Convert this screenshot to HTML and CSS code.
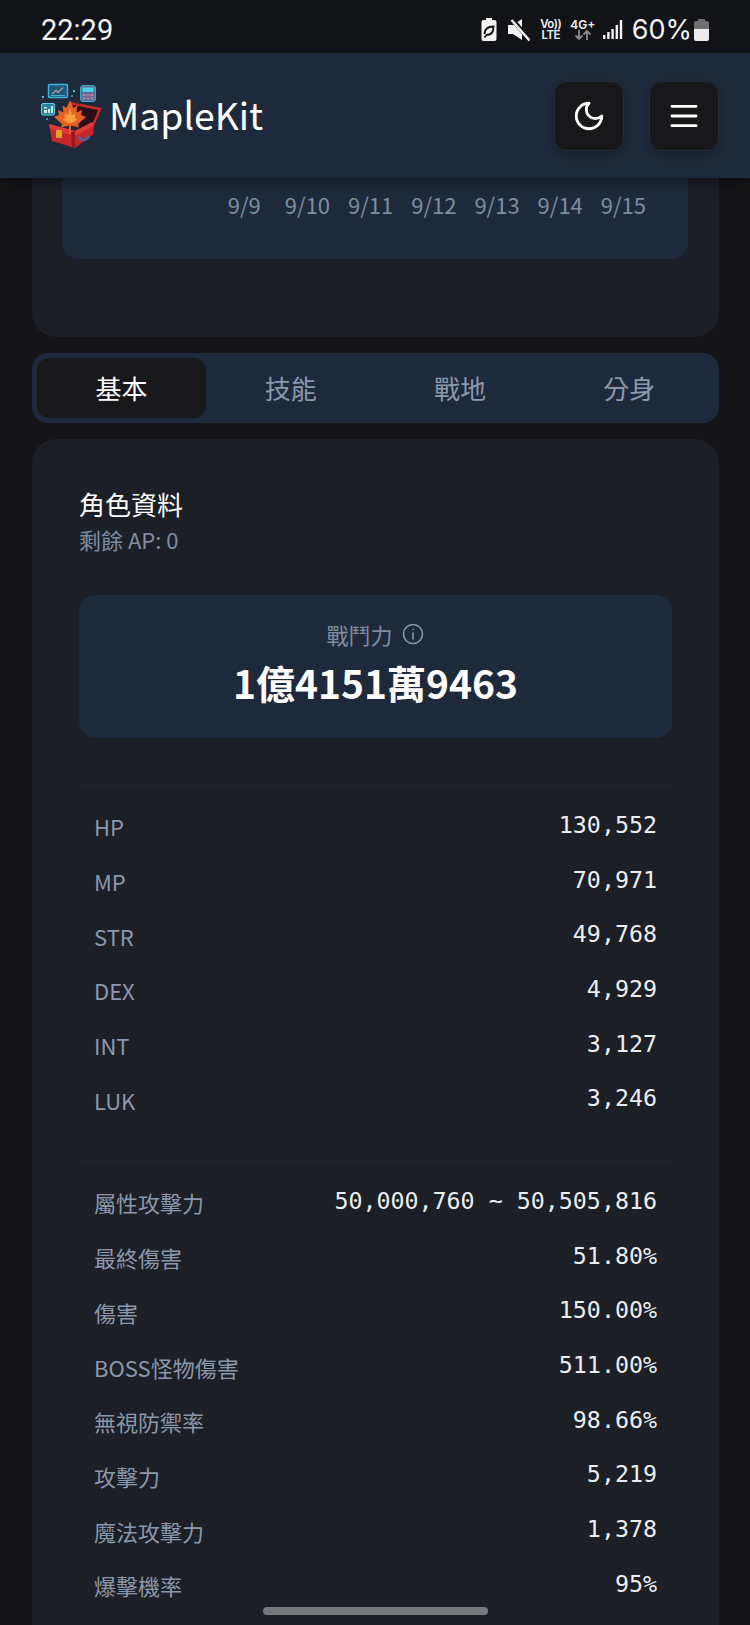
FILE: index.html
```html
<!DOCTYPE html>
<html lang="zh-Hant">
<head>
	<meta charset="utf-8">
	<title>MapleKit</title>
	<link rel="stylesheet" href="styles.css">
</head>
<body>
	<div class="status-bar">
		<span class="clock">22:29</span>
		<div class="status-icons">
			<svg class="ic-saver" width="16" height="23" viewBox="0 0 16 23"><path d="M5 0h6v2h2.500a2 2 0 0 1 2 2v17a2 2 0 0 1-2 2h-11a2 2 0 0 1-2-2V4a2 2 0 0 1 2-2H5z" fill="#f2f2f2"/><path d="M3.500 16c0-5 3-7.500 9-7.500 0 5.500-2.500 8.500-7 8.500l-2 2.500" fill="none" stroke="#15161a" stroke-width="2"/></svg>
			<svg class="ic-mute" width="22" height="22" viewBox="0 0 22 22"><path d="M0 6h5l9-6v21l-9-6H0z" fill="#f2f2f2"/><path d="M3 -1l20 23" stroke="#15161a" stroke-width="4.500"/><path d="M3.500 1l18 20.500" stroke="#f2f2f2" stroke-width="2.400"/></svg>
			<span class="volte">Vo))<br>LTE</span>
			<span class="net">4G+<svg width="18" height="10" viewBox="0 0 18 10"><path d="M5 0v9M1.500 5.500 5 9l3.500-3.500" fill="none" stroke="#8a8a8a" stroke-width="1.800"/><path d="M13 10V1M9.500 4.500 13 1l3.500 3.500" fill="none" stroke="#8a8a8a" stroke-width="1.800"/></svg></span>
			<svg class="ic-signal" width="20" height="21" viewBox="0 0 20 21"><path d="M0 16h2.400v4H0zM4.200 13h2.400v7H4.200zM8.400 10h2.400v10H8.400zM12.600 6H15v14h-2.400zM16.800 1h2.400v19h-2.400z" fill="#f2f2f2"/></svg>
			<span class="pct">60%</span>
			<svg class="ic-batt" width="15" height="22" viewBox="0 0 15 22"><path d="M4 0h7v2h2a2 2 0 0 1 2 2v6H0V4a2 2 0 0 1 2-2h2z" fill="#6f6f72"/><path d="M0 10h15v10a2 2 0 0 1-2 2H2a2 2 0 0 1-2-2z" fill="#ececec"/></svg>
		</div>
	</div>

	<header class="top-nav">
		<div class="brand">
			<svg class="logo" width="62" height="68" viewBox="0 0 62 68">
				<circle cx="2" cy="15" r="1.200" fill="#4fb6c9"/>
				<circle cx="33" cy="9" r="1.200" fill="#4fb6c9"/>
				<circle cx="31" cy="14" r="1" fill="#4fb6c9"/>
				<circle cx="6" cy="37" r="1" fill="#4fb6c9"/>
				<rect x="7.500" y="2.500" width="19" height="13" rx="1" fill="#24567a" stroke="#38b6d8" stroke-width="1.400"/>
				<path d="M11 12l4-3.500 2 2 5-5" fill="none" stroke="#9aa0a8" stroke-width="1.300"/>
				<path d="M10 13.500h14" stroke="#4fa6c8"/>
				<rect x="39.500" y="3.500" width="15" height="16" rx="2.500" fill="#5a6f96" stroke="#3aa6c8"/>
				<rect x="41.500" y="5.500" width="11" height="4.500" fill="#4fd0e6"/>
				<path d="M41.500 12h3v2h-3zM45.500 12h3v2h-3zM49.500 12h3v2h-3zM41.500 15.500h3v2h-3zM45.500 15.500h3v2h-3zM49.500 15.500h3v2h-3z" fill="#b87898"/>
				<rect x="0.500" y="21.500" width="13" height="11.500" rx="1.500" fill="#2a7f9c" stroke="#5fd0e6"/>
				<path d="M3 25h3v1.500H3zM3 28h3v3H3zM7 27h2v4H7zM10 24h2v7h-2z" fill="#c8f0d8"/>
				<path d="M28 21l31 6-9 21-30-6z" fill="#2a0f1a"/>
				<path d="M28 21l31 6-9 21" fill="none" stroke="#c62a2a" stroke-width="2.500"/>
				<path d="M8 42l26 7 18-9 .5 12L34 66 11 59z" fill="#c4262a"/>
				<path d="M8 42l26 7 17-9 1.500 4L34 54 9 47z" fill="#e0383a"/>
				<path d="M34 49v17l-3-1-1-15z" fill="#98181f"/>
				<rect x="15" y="48" width="6" height="8" rx="1" fill="#e0a028"/>
				<path d="M38 55c2 4 7 4 10-1" fill="none" stroke="#5a5f90" stroke-width="3"/>
				<path d="M29 18l3.500 8 4-2.500-1 7 5.500-2.500-1 5 5 2-8 7 1 3.500-8-2v8h-2v-8l-8 2 1-3.500-8-7 5-2-1-5 5.500 2.500-1-7 4 2.500z" fill="#e8601f"/>
				<path d="M29 26l2 7 3.500-1.500-1 5 3 1-5.500 3.500h-4l-5.500-3.500 3-1-1-5 3.500 1.500z" fill="#f8a040"/>
			</svg>
			<span class="brand-name">MapleKit</span>
		</div>
		<div class="nav-btns">
			<button class="nav-btn"><svg width="34" height="34" viewBox="0 0 24 24" fill="none" stroke="#fff" stroke-width="2" stroke-linecap="round" stroke-linejoin="round"><path d="M12 3a6 6 0 0 0 9 9 9 9 0 1 1-9-9z"/></svg></button>
			<button class="nav-btn"><svg width="34" height="34" viewBox="0 0 24 24" fill="none" stroke="#fff" stroke-width="2" stroke-linecap="round"><path d="M3.500 5.200h17M3.500 12h17M3.500 18.800h17"/></svg></button>
		</div>
	</header>

	<main class="content">
		<section class="card chart-card">
			<div class="chart-box">
				<div class="chart-axis">
					<span>9/9</span><span>9/10</span><span>9/11</span><span>9/12</span><span>9/13</span><span>9/14</span><span>9/15</span>
				</div>
			</div>
		</section>

		<nav class="tabs">
			<span class="tab active">基本</span>
			<span class="tab">技能</span>
			<span class="tab">戰地</span>
			<span class="tab">分身</span>
		</nav>

		<section class="card stats-card">
			<h2 class="card-title">角色資料</h2>
			<p class="card-sub">剩餘 AP: 0</p>

			<div class="power-box">
				<div class="power-label">戰鬥力
					<svg width="24" height="24" viewBox="0 0 24 24" fill="none" stroke="#8b98ab" stroke-width="1.600" stroke-linecap="round"><circle cx="12" cy="12" r="9.500"/><path d="M12 11v6M12 7.300v.2"/></svg>
				</div>
				<div class="power-value">1億4151萬9463</div>
			</div>

			<div class="stat-group">
				<div class="stat-row"><span>HP</span><b>130,552</b></div>
				<div class="stat-row"><span>MP</span><b>70,971</b></div>
				<div class="stat-row"><span>STR</span><b>49,768</b></div>
				<div class="stat-row"><span>DEX</span><b>4,929</b></div>
				<div class="stat-row"><span>INT</span><b>3,127</b></div>
				<div class="stat-row"><span>LUK</span><b>3,246</b></div>
			</div>

			<div class="stat-group">
				<div class="stat-row"><span>屬性攻擊力</span><b>50,000,760 ~ 50,505,816</b></div>
				<div class="stat-row"><span>最終傷害</span><b>51.80%</b></div>
				<div class="stat-row"><span>傷害</span><b>150.00%</b></div>
				<div class="stat-row"><span>BOSS怪物傷害</span><b>511.00%</b></div>
				<div class="stat-row"><span>無視防禦率</span><b>98.66%</b></div>
				<div class="stat-row"><span>攻擊力</span><b>5,219</b></div>
				<div class="stat-row"><span>魔法攻擊力</span><b>1,378</b></div>
				<div class="stat-row"><span>爆擊機率</span><b>95%</b></div>
			</div>
		</section>
	</main>

	<div class="home-bar"></div>
</body>
</html>
```

FILE: styles.css
```css
*{
	margin: 0;
	padding: 0;
	box-sizing: border-box;
}
html,body{
	height: 1625px;
	overflow: hidden;
}
body{
	background-color: #141416;
	font-family: "Noto Sans CJK TC", "Noto Sans", sans-serif;
	position: relative;
	color: #fff;
}

/* status bar */
.status-bar{
	height: 53px;
	background-color: #121317;
	display: flex;
	align-items: center;
	justify-content: space-between;
	padding: 6px 41px 0 41px;
}
.clock{
	font-family: Roboto, sans-serif;
	font-size: 29px;
	color: #f4f4f4;
}
.status-icons{
	display: flex;
	align-items: center;
	color: #f2f2f2;
	font-family: Inter, Roboto, sans-serif;
}
.ic-saver{
	margin-right: 11px;
}
.ic-mute{
	margin-right: 10px;
}
.volte{
	width: 22px;
	font-size: 11.500px;
	font-weight: 600;
	letter-spacing: -.5px;
	line-height: 11px;
	text-align: center;
	margin-right: 9px;
	white-space: nowrap;
}
.net{
	width: 24px;
	font-size: 12px;
	font-weight: 600;
	line-height: 11px;
	display: flex;
	flex-direction: column;
	align-items: center;
	margin-right: 8px;
	white-space: nowrap;
}
.ic-signal{
	margin-right: 9px;
}
.pct{
	font-size: 27px;
	margin-right: 2px;
}

/* header */
.top-nav{
	height: 125px;
	background-color: #1e293b;
	display: flex;
	align-items: center;
	justify-content: space-between;
	padding: 0 31px 0 41px;
	position: relative;
	z-index: 2;
	box-shadow: 0 4px 10px rgba(0,0,0,.4);
}
.brand{
	display: flex;
	align-items: center;
	gap: 6px;
}
.brand-name{
	font-size: 37.300px;
	line-height: 1;
	margin-bottom: 2px;
}
.nav-btns{
	display: flex;
	gap: 25px;
}
.nav-btn{
	width: 70px;
	height: 70px;
	border: 1px solid #272c36;
	border-radius: 12px;
	background-color: #18181b;
	display: flex;
	align-items: center;
	justify-content: center;
	box-shadow: 0 4px 12px rgba(0,0,0,.25);
}

/* page */
.content{
	padding: 0 31px 0 32px;
}
.card{
	background-color: #1c1f26;
	border-radius: 24px;
}
.chart-card{
	height: 159px;
	padding: 0 31px 0 30px;
	border-radius: 0 0 24px 24px;
}
.chart-box{
	height: 81px;
	background-color: #1e293b;
	border-radius: 0 0 16px 16px;
	padding: 10px 33px 0 0;
}
.chart-axis{
	display: flex;
	justify-content: flex-end;
	font-size: 22px;
	line-height: 32px;
	color: #7f8c9f;
}
.chart-axis span{
	width: 63.200px;
	text-align: center;
	white-space: nowrap;
}

.tabs{
	height: 70px;
	margin-top: 16px;
	background-color: #1e293b;
	border-radius: 16px;
	padding: 5px;
	display: flex;
}
.tab{
	flex: 1;
	border-radius: 12px;
	font-size: 26px;
	color: #8b98ab;
	display: flex;
	align-items: center;
	justify-content: center;
	padding-bottom: 2px;
}
.tab.active{
	background-color: #18181b;
	color: #fff;
}

.stats-card{
	margin-top: 16px;
	padding: 48px 47px 0;
	height: 1186px;
	border-radius: 24px 24px 0 0;
}
.card-title{
	font-size: 26px;
	font-weight: 400;
	line-height: 34px;
}
.card-sub{
	font-size: 22px;
	line-height: 34px;
	margin-top: 1px;
	color: #7f8c9f;
}
.power-box{
	margin-top: 39px;
	height: 143px;
	background-color: #1e293b;
	border-radius: 16px;
	display: flex;
	flex-direction: column;
	align-items: center;
	padding-top: 24px;
}
.power-label{
	font-size: 22px;
	line-height: 30px;
	color: #7f8c9f;
	display: flex;
	align-items: center;
	gap: 8px;
}
.power-value{
	font-size: 39px;
	font-weight: 700;
	line-height: 56px;
	margin-top: 5px;
}
.stat-group{
	margin-top: 34px;
	border-top: 1px solid #222731;
	padding: 13px 15px 0;
}
.power-box + .stat-group{
	margin-top: 47px;
}
.stat-row{
	height: 54.700px;
	display: flex;
	align-items: center;
	justify-content: space-between;
	font-size: 22px;
	color: #8b98ab;
}
.stat-row b{
	font-family: "DejaVu Sans Mono", monospace;
	font-weight: 400;
	font-size: 23.300px;
	color: #eceef1;
	margin-bottom: 4px;
}

.home-bar{
	position: absolute;
	left: 263px;
	bottom: 10px;
	width: 225px;
	height: 8px;
	border-radius: 4px;
	background-color: #77787c;
}
```
